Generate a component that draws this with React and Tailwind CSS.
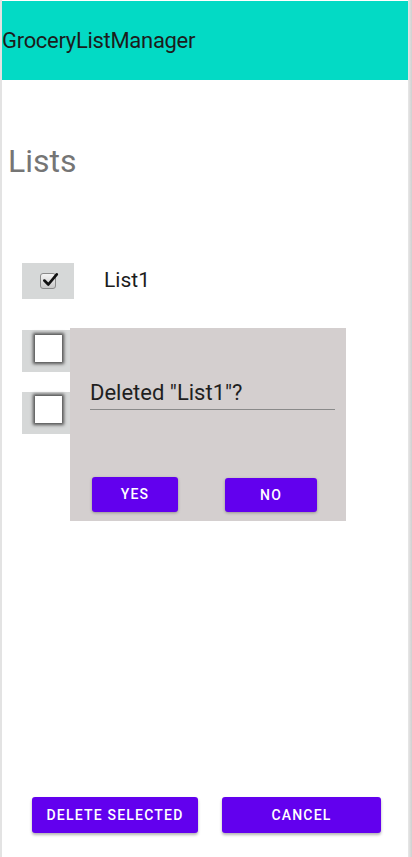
import React from "react";

const font = { fontFamily: "Roboto, 'Noto Sans', sans-serif" };

function EmptyBox() {
  return (
    <div className="w-[27px] h-[27px] bg-white shadow-[0_0_3px_2px_rgba(60,60,60,0.85)]" />
  );
}

function CheckedBox() {
  return (
    <div className="w-[16px] h-[16px] rounded-[3px] bg-gradient-to-b from-[#f4f4f4] to-[#c8c8c8] border border-[#8a8a8a] relative">
      <svg viewBox="0 0 16 16" className="absolute -top-[3px] left-[0px] w-[18px] h-[18px]">
        <path d="M3 8.5 L6.5 12 L14 3" fill="none" stroke="#111" strokeWidth="2.4" strokeLinecap="round" strokeLinejoin="round" />
      </svg>
    </div>
  );
}

export default function App() {
  return (
    <div className="relative w-[412px] h-[857px] bg-white overflow-hidden" style={font}>
      <div className="flex h-full">
        <div className="w-[2px] bg-[#e3e3e3]" />
        <div className="flex-1 flex flex-col">
          <div className="h-[1px] bg-white" />
          <div className="h-[79px] bg-[#03dac5] flex items-center">
            <span className="text-[22px] text-[#1c1c1c] leading-none tracking-[-0.3px] mt-[1px]">GroceryListManager</span>
          </div>
          <div className="pl-[6px] pt-[63px] text-[32px] leading-[36px] text-[#757575]">Lists</div>
          <div className="flex flex-col pl-[20px] pt-[84px]">
            <div className="flex items-center h-[36px]">
              <div className="w-[52px] h-[36px] bg-[#d6d8d8] flex items-center justify-center">
                <CheckedBox />
              </div>
              <span className="ml-[30px] text-[21px] text-[#1c1c1c]">List1</span>
            </div>
            <div className="mt-[31px] w-[52px] h-[42px] bg-[#d6d8d8] flex items-start justify-center pt-[5px]">
              <EmptyBox />
            </div>
            <div className="mt-[20px] w-[52px] h-[42px] bg-[#d6d8d8] flex items-start justify-center pt-[4px]">
              <EmptyBox />
            </div>
          </div>
          <div className="flex-1" />
          <div className="flex items-center gap-[24px] pl-[30px] pb-[24px]">
            <button className="w-[166px] h-[36px] rounded-[3px] bg-[#6200ee] text-white text-[14px] font-medium tracking-[1.2px] shadow-[0_2px_3px_rgba(0,0,0,0.3)]">
              DELETE SELECTED
            </button>
            <button className="w-[159px] h-[36px] rounded-[3px] bg-[#6200ee] text-white text-[14px] font-medium tracking-[1.2px] shadow-[0_2px_3px_rgba(0,0,0,0.3)]">
              CANCEL
            </button>
          </div>
        </div>
        <div className="w-[4px] bg-gradient-to-r from-[#e8e8e8] to-[#d0d0d0]" />
      </div>

      <div className="absolute left-[70px] top-[328px] w-[276px] h-[193px] bg-[#d4cfcf] flex flex-col">
        <div className="ml-[20px] mr-[11px] mt-[51px] border-b-[1.5px] border-[#8a8a8a] pb-[2px]">
          <span className="text-[22px] text-[#1f1f1f] leading-[28px]">Deleted "List1"?</span>
        </div>
        <div className="flex mt-[67px] pl-[22px]">
          <button className="w-[86px] h-[35px] rounded-[3px] bg-[#6200ee] text-white text-[14px] font-medium tracking-[1.2px] shadow-[0_1px_3px_rgba(0,0,0,0.3)]">
            YES
          </button>
          <button className="ml-[47px] w-[92px] h-[34px] mt-[1px] rounded-[3px] bg-[#6200ee] text-white text-[14px] font-medium tracking-[1.2px] shadow-[0_1px_3px_rgba(0,0,0,0.3)]">
            NO
          </button>
        </div>
      </div>
    </div>
  );
}
